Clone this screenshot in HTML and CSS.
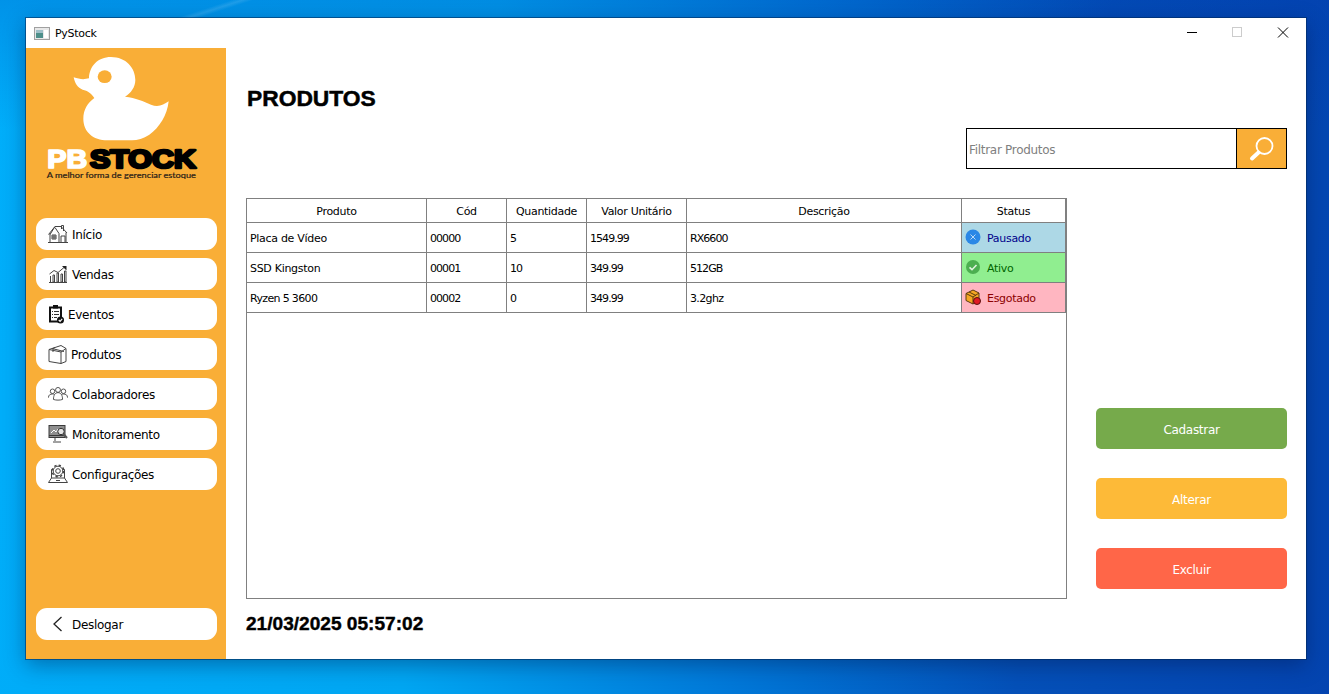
FILE: index.html
```html
<!DOCTYPE html>
<html lang="pt-BR">
<head>
<meta charset="utf-8">
<title>PyStock</title>
<link rel="stylesheet" href="styles.css">
</head>
<body>
<div class="glow"></div>
<div class="window">
  <header class="titlebar">
    <svg class="app-icon" width="16" height="13" viewBox="0 0 16 13"><rect x=".5" y=".5" width="15" height="12" fill="#e8e8e8" stroke="#a0a0a0"/><rect x="2" y="3" width="7" height="8" fill="#4d8f8a"/><rect x="2" y="3" width="7" height="3" fill="#9fc0c8"/><rect x="10" y="3" width="4" height="8" fill="#fff"/></svg>
    <span class="app-name">PyStock</span>
    <div class="win-controls">
      <svg width="46" height="30" viewBox="0 0 46 30"><path d="M19 14.500h10" stroke="#000"/></svg>
      <svg width="46" height="30" viewBox="0 0 46 30"><rect x="18.500" y="9.500" width="9" height="9" fill="none" stroke="#ccc"/></svg>
      <svg width="46" height="30" viewBox="0 0 46 30"><path d="M18 9.500l10 10M28 9.500l-10 10" stroke="#000" fill="none"/></svg>
    </div>
  </header>
  <div class="content">
    <aside class="sidebar">
      <svg class="logo" width="200" height="140" viewBox="0 90 600 420">
        <path class="duck" d="M255 117C300 117 328 150 328 186C328 207 315 225 297 236C330 240 352 250 375 260C395 268 412 262 428 250C424 290 400 330 370 350C352 362 335 367 318 367H245C200 367 172 340 172 302C172 275 185 255 205 240C195 225 185 218 170 215C155 210 146 195 143 178C160 184 175 185 189 181C190 145 215 117 255 117Z"/>
        <ellipse class="eye" cx="236" cy="176" rx="21" ry="19"/>
        <text class="wm wm-pb" x="64" y="449" textLength="120" lengthAdjust="spacingAndGlyphs">PB</text>
        <text class="wm wm-stock" x="192" y="449" textLength="318" lengthAdjust="spacingAndGlyphs">STOCK</text>
        <text class="tagline" x="62" y="479" textLength="448" lengthAdjust="spacingAndGlyphs">A melhor forma de gerenciar estoque</text>
      </svg>
      <nav class="nav">
        <a class="nav-btn">
          <svg class="ico" width="20" height="20" viewBox="0 0 20 20"><path d="M0 18.500h20M2 18V9.500M18 18V8.500M.5 10.500L7 2.500h6l6 6.500M7 2.500l-5 8M7 3.500l4 6v8.500M13.500 5V1.500h2V7M4 11h4v4H4zM6 11v4M4 13h4M13 18v-6h4v6"/></svg>
          <span class="label">Início</span>
        </a>
        <a class="nav-btn">
          <svg class="ico" width="20" height="20" viewBox="0 0 20 20"><path d="M1 18.500h18M2.500 18v-6M5 11h1.500v7H5zM9 9h1.500v9H9zM13 10h1.500v8H13zM16.500 7H18v11h-1.500zM1.500 10L6 6.500l4 2L16 3.500"/><path class="solid" d="M14 2h4.500v4.500z"/></svg>
          <span class="label">Vendas</span>
        </a>
        <a class="nav-btn">
          <svg class="ico-dark" width="16" height="20" viewBox="0 0 16 20"><path class="clip" d="M2 3.500h11v14H2z"/><rect class="solid" x="5" y="1" width="5" height="3.500"/><path class="clip-lines" d="M4 7.500h1M6 7.500h5M4 10.500h1M6 10.500h5M4 13.500h1M6 13.500h3"/><circle class="solid" cx="12.500" cy="16" r="3.500"/><path class="check-w" d="M10.800 16l1.300 1.300 2.100-2.500"/></svg>
          <span class="label">Eventos</span>
        </a>
        <a class="nav-btn">
          <svg class="ico" width="19" height="20" viewBox="0 0 19 20"><path d="M1 5.500L13 1.500l5 3v13l-5 2-12-2zM1 5.500l12 2.500 5-3.500M13 8v11.500M4 4.500l12 3M7 3.500L5 4.500v3.500"/></svg>
          <span class="label">Produtos</span>
        </a>
        <a class="nav-btn">
          <svg class="ico" width="20" height="20" viewBox="0 0 22 20"><circle cx="5" cy="7" r="2.500"/><circle cx="11" cy="5.500" r="2.700"/><circle cx="17" cy="7" r="2.500"/><path d="M.5 14c0-3 2-4 4.500-4 1 0 1.500.2 2 .5M21.500 14c0-3-2-4-4.500-4-1 0-1.500.2-2 .5M6 16c0-5 2-7.500 5-7.500s5 2.500 5 7.500c-3 1-7 1-10 0z"/></svg>
          <span class="label">Colaboradores</span>
        </a>
        <a class="nav-btn">
          <svg class="ico" width="20" height="20" viewBox="0 0 20 20"><rect class="screen" x="1" y="1.500" width="16" height="12"/><path d="M7 14v3M5 18h8"/><path class="base" d="M1 11.500h16"/><path class="white" d="M3 9l3-3 2 2 2-3"/><circle class="lens" cx="13" cy="7.500" r="3.200"/><path class="handle" d="M15.500 10l3.500 4"/></svg>
          <span class="label">Monitoramento</span>
        </a>
        <a class="nav-btn">
          <svg class="ico" width="20" height="20" viewBox="0 0 20 20"><path d="M3.500 14V5.500H5M16.500 14V5.500H15M.5 18.500h19l-3-4.500h-13zM8 16.500h4"/><circle cx="10" cy="7" r="4.800" class="gear-fill"/><circle cx="10" cy="7" r="5.800" class="teeth"/><circle cx="10" cy="7" r="2.300"/></svg>
          <span class="label">Configurações</span>
        </a>
      </nav>
      <a class="nav-btn logout">
        <svg class="ico" width="20" height="20" viewBox="0 0 20 20"><path class="chev" d="M13.500 3L6 10l7.500 7"/></svg>
        <span class="label">Deslogar</span>
      </a>
    </aside>
    <main class="main">
      <h1 class="page-title">PRODUTOS</h1>
      <div class="toolbar">
        <div class="search">
          <span class="search-input">Filtrar Produtos</span>
          <span class="search-btn">
            <svg width="26" height="26" viewBox="0 0 26 26"><circle cx="15.500" cy="10" r="8" fill="none" stroke="#fff" stroke-width="1.800"/><path d="M9.500 16.500L3 22.500" stroke="#fff" stroke-width="4" stroke-linecap="round"/></svg>
          </span>
        </div>
      </div>
      <section class="workspace">
        <div class="table-box">
          <table class="grid">
            <colgroup>
              <col class="c-prod"><col class="c-cod"><col class="c-qtd"><col class="c-val"><col class="c-desc"><col class="c-stat">
            </colgroup>
            <thead>
              <tr><th>Produto</th><th>Cód</th><th>Quantidade</th><th>Valor Unitário</th><th>Descrição</th><th>Status</th></tr>
            </thead>
            <tbody>
              <tr><td>Placa de Vídeo</td><td class="num">00000</td><td class="num">5</td><td class="num">1549.99</td><td class="num">RX6600</td>
                <td class="st st-paused"><span class="st-in"><svg width="16" height="16" viewBox="0 0 16 16"><circle cx="8" cy="8" r="7.500" fill="#2b87e6"/><path d="M5.500 5.500l5 5M10.500 5.500l-5 5" stroke="#bcd9f5" fill="none"/></svg>Pausado</span></td></tr>
              <tr><td>SSD Kingston</td><td class="num">00001</td><td class="num">10</td><td class="num">349.99</td><td class="num">512GB</td>
                <td class="st st-active"><span class="st-in"><svg width="16" height="16" viewBox="0 0 16 16"><circle cx="8" cy="8" r="7" fill="#4caf50"/><path d="M4.500 8.300l2.500 2.400 4.500-4.700" stroke="#e0f2e0" stroke-width="1.600" fill="none"/></svg>Ativo</span></td></tr>
              <tr><td class="mixed">Ryzen 5 3600</td><td class="num">00002</td><td class="num">0</td><td class="num">349.99</td><td class="mixed">3.2ghz</td>
                <td class="st st-out"><span class="st-in"><svg width="16" height="16" viewBox="0 0 16 16"><path d="M1 4.500L8 1l6 3v7l-6 4-7-3.500z" fill="#f5a623" stroke="#5a3a10"/><path d="M1 4.500l7 3.500 6-4M8 8v7M4 3l7 3.500" stroke="#5a3a10" fill="none"/><circle cx="12" cy="12" r="3.500" fill="#e01b24" stroke="#5a1010"/></svg>Esgotado</span></td></tr>
            </tbody>
          </table>
        </div>
        <div class="actions">
          <button class="act act-add">Cadastrar</button>
          <button class="act act-edit">Alterar</button>
          <button class="act act-del">Excluir</button>
        </div>
      </section>
      <div class="clock">21/03/2025 05:57:02</div>
    </main>
  </div>
</div>
</body>
</html>
```
FILE: styles.css
```css
* { box-sizing: border-box; }
html, body { height: 100%; }
body {
  margin: 0;
  height: 694px;
  overflow: hidden;
  padding: 18px 23px 35px 26px;
  font-family: "DejaVu Sans", sans-serif;
  font-size: 12px;
  letter-spacing: -0.3px;
  color: #000;
  background: linear-gradient(98deg, #00aefa 0%, #00a6f2 35%, #0078d8 58%, #0450b8 78%, #0444b0 100%);
  position: relative;
}
.glow {
  position: absolute;
  left: 0; top: 0; right: 0; height: 130px;
  background:
    linear-gradient(162deg, rgba(255,255,255,0) 42%, rgba(255,255,255,.12) 50%, rgba(255,255,255,0) 58%) 170px 0 / 90px 18px no-repeat,
    linear-gradient(180deg, rgba(0,50,170,.22), rgba(0,50,170,0));
}
.window {
  position: relative;
  width: 1280px;
  height: 641px;
  background: #fff;
  display: flex;
  flex-direction: column;
  box-shadow: 0 0 0 1px rgba(0,40,90,.55), 0 6px 20px rgba(0,20,70,.4);
}
.titlebar {
  height: 30px;
  display: flex;
  align-items: center;
  padding-left: 8px;
  flex: none;
}
.app-icon { flex: none; }
.app-name { margin-left: 5px; font-size: 11px; }
.win-controls { margin-left: auto; display: flex; }
.win-controls svg { display: block; }
.content { flex: 1; display: flex; min-height: 0; }
.sidebar {
  width: 200px;
  flex: none;
  background: #f9ae37;
  display: flex;
  flex-direction: column;
  padding: 0 9px 19px 10px;
}
.logo { display: block; margin: 0 -9px 0 -10px; flex: none; letter-spacing: 0; }
.duck { fill: #fff; }
.eye { fill: #f9ae37; }
.wm {
  font-family: "Liberation Sans", sans-serif;
  font-weight: 700;
  font-size: 76px;
  stroke-width: 8px;
  stroke-linejoin: round;
}
.wm-pb { fill: #fff; stroke: #fff; stroke-width: 5px; }
.wm-stock { fill: #000; stroke: #000; }
.tagline {
  font-family: "Lato", sans-serif;
  font-size: 24px;
  font-weight: 400;
  fill: #2a2118;
  stroke: #2a2118;
  stroke-width: .6px;
}
.nav { display: flex; flex-direction: column; gap: 8px; margin-top: 30px; }
.nav-btn {
  height: 32px;
  background: #fff;
  border-radius: 11px;
  display: flex;
  align-items: center;
  gap: 4px;
  padding-left: 12px;
  color: #000;
}
.label { padding-top: 2px; }
.logout { margin-top: auto; }
.ico { flex: none; fill: none; stroke: #444; stroke-width: 1; }
.ico .solid { fill: #222; stroke: none; }
.ico .screen { fill: #8f8f8f; stroke: #3a3a3a; }
.ico .base { stroke: #3a3a3a; }
.ico .lens { fill: #e4e4e4; stroke: #333; }
.ico .handle { stroke: #555; stroke-width: 2; }
.ico .white { stroke: #fff; }
.ico .gear-fill { fill: #fff; }
.ico .teeth { stroke-width: 1.500; stroke-dasharray: 2.300 2.255; }
.ico .chev { stroke: #222; stroke-width: 1.300; }
.ico-dark { flex: none; fill: none; }
.ico-dark .clip { fill: #fff; stroke: #111; stroke-width: 2; }
.ico-dark .solid { fill: #111; }
.ico-dark .clip-lines { stroke: #333; }
.ico-dark .check-w { stroke: #fff; stroke-width: 1.200; }
.main {
  flex: 1;
  min-width: 0;
  display: flex;
  flex-direction: column;
  padding: 38px 19px 0 20px;
}
.page-title {
  margin: 0 0 18px 1px;
  font-family: "Liberation Sans", sans-serif;
  font-weight: 700;
  font-size: 22.800px;
  line-height: 24px;
  letter-spacing: 0;
  -webkit-text-stroke: .5px #000;
}
.toolbar { display: flex; justify-content: flex-end; margin-bottom: 29px; }
.search {
  width: 321px;
  height: 41px;
  border: 1px solid #000;
  display: flex;
}
.search-input {
  flex: 1;
  padding: 2px 0 0 2px;
  display: flex;
  align-items: center;
  color: #808080;
}
.search-btn {
  width: 50px;
  flex: none;
  background: #f9ae37;
  border-left: 1px solid #000;
  display: flex;
  align-items: center;
  justify-content: center;
}
.workspace { display: flex; height: 401px; gap: 29px; flex: none; }
.table-box {
  width: 821px;
  flex: none;
  border: 1px solid #808080;
}
.grid {
  width: 819px;
  table-layout: fixed;
  border-collapse: separate;
  border-spacing: 0;
  font-size: 11px;
}
.c-prod { width: 180px; }
.c-cod { width: 80px; }
.c-qtd { width: 80px; }
.c-val { width: 100px; }
.c-desc { width: 275px; }
.c-stat { width: 104px; }
.grid th, .grid td {
  border-right: 1px solid #808080;
  border-bottom: 1px solid #808080;
  padding: 2px 0 0 3px;
  white-space: nowrap;
}
.grid th {
  height: 24px;
  font-weight: 400;
  text-align: center;
  padding: 2px 0 0;
}
.grid td { height: 30px; }
.grid td.num { letter-spacing: -0.95px; }
.grid td.mixed { letter-spacing: -0.65px; }
.st-in { display: flex; align-items: center; gap: 6px; }
.st-in svg { flex: none; margin-top: -3px; }
.st-paused { background: #add8e6; color: #00008b; }
.st-active { background: #90ee90; color: #006400; }
.st-out { background: #ffb6c1; color: #8b0000; }
.actions {
  width: 191px;
  flex: none;
  display: flex;
  flex-direction: column;
  justify-content: flex-end;
  gap: 29px;
  padding-bottom: 10px;
}
.act {
  height: 41px;
  border: 0;
  border-radius: 5px;
  color: #fff;
  font: inherit;
  letter-spacing: inherit;
  padding: 2px 0 0;
}
.act-add { background: #76aa4b; }
.act-edit { background: #fdba38; }
.act-del { background: #ff6648; }
.clock {
  margin: 13px 0 0;
  font-family: "Liberation Sans", sans-serif;
  font-weight: 700;
  font-size: 19.100px;
  line-height: 24px;
  letter-spacing: 0;
  -webkit-text-stroke: .4px #000;
}
```
